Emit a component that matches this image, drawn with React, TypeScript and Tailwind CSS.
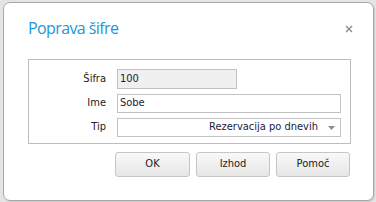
export default function App() {
  return (
    <div className="w-[376px] h-[202px] bg-[#e4e4e4] pt-[2px] pl-[3px] overflow-hidden">
      {/* dialog panel */}
      <div className="w-[371px] h-[199px] bg-white rounded-[7px] border border-[#a9a9a9] shadow-[1px_1px_1px_rgba(0,0,0,0.12)] flex flex-col pl-[24px] pr-[22px] pt-[15px]">
        {/* header */}
        <div className="flex items-center justify-between h-5">
          <h1 className="text-[16px] leading-5 text-[#2196d8] font-['Open_Sans',sans-serif] tracking-[-0.6px]">
            Poprava šifre
          </h1>
          <svg width="8" height="8" viewBox="0 0 8 8" className="-mr-[2px] mt-[2px]">
            <path d="M1 1L7 7M7 1L1 7" stroke="#8a8a8a" strokeWidth="1.4" />
          </svg>
        </div>

        {/* fields */}
        <div className="mt-[21px] w-[323px] border border-[#bdbdbd] pt-[9px] pb-[6px] pr-[9px] flex flex-col gap-[5px] font-['DejaVu_Sans_Condensed','DejaVu_Sans',sans-serif] text-[11px] text-[#222]">
          <div className="flex items-center h-[20px]">
            <span className="w-[78px] text-right pr-px">Šifra</span>
            <div className="ml-[10px] w-[120px] h-full bg-[#f0f0f0] border border-[#c2c2c2] flex items-center pl-[2px] text-[#1c1c3c]">
              100
            </div>
          </div>
          <div className="flex items-center h-[19px]">
            <span className="w-[78px] text-right pr-px">Ime</span>
            <div className="ml-[10px] flex-1 h-full bg-white border border-[#c2c2c2] flex items-center pl-[2px] text-[#1c1c3c]">
              Sobe
            </div>
          </div>
          <div className="flex items-center h-[19px]">
            <span className="w-[78px] text-right pr-px">Tip</span>
            <div className="ml-[10px] flex-1 h-full bg-white border border-[#c2c2c2] flex items-center justify-end pr-[5px] text-[#1c1c3c]">
              <span>Rezervacija po dnevih</span>
              <svg width="7" height="4" viewBox="0 0 7 4" className="ml-[10px]">
                <path d="M0 0H7L3.5 4Z" fill="#8c8c8c" />
              </svg>
            </div>
          </div>
        </div>

        {/* buttons */}
        <div className="mt-2 w-[322px] flex justify-end gap-[6px] font-['DejaVu_Sans_Condensed','DejaVu_Sans',sans-serif] text-[11px] text-[#222]">
          <button className="w-[75px] h-[25px] rounded-[3px] border border-[#c6c6c6] bg-gradient-to-b from-[#f9f9f9] to-[#e6e6e6]">
            OK
          </button>
          <button className="w-[74px] h-[25px] rounded-[3px] border border-[#c6c6c6] bg-gradient-to-b from-[#f9f9f9] to-[#e6e6e6]">
            Izhod
          </button>
          <button className="w-[74px] h-[25px] rounded-[3px] border border-[#c6c6c6] bg-gradient-to-b from-[#f9f9f9] to-[#e6e6e6]">
            Pomoč
          </button>
        </div>
      </div>
    </div>
  );
}
